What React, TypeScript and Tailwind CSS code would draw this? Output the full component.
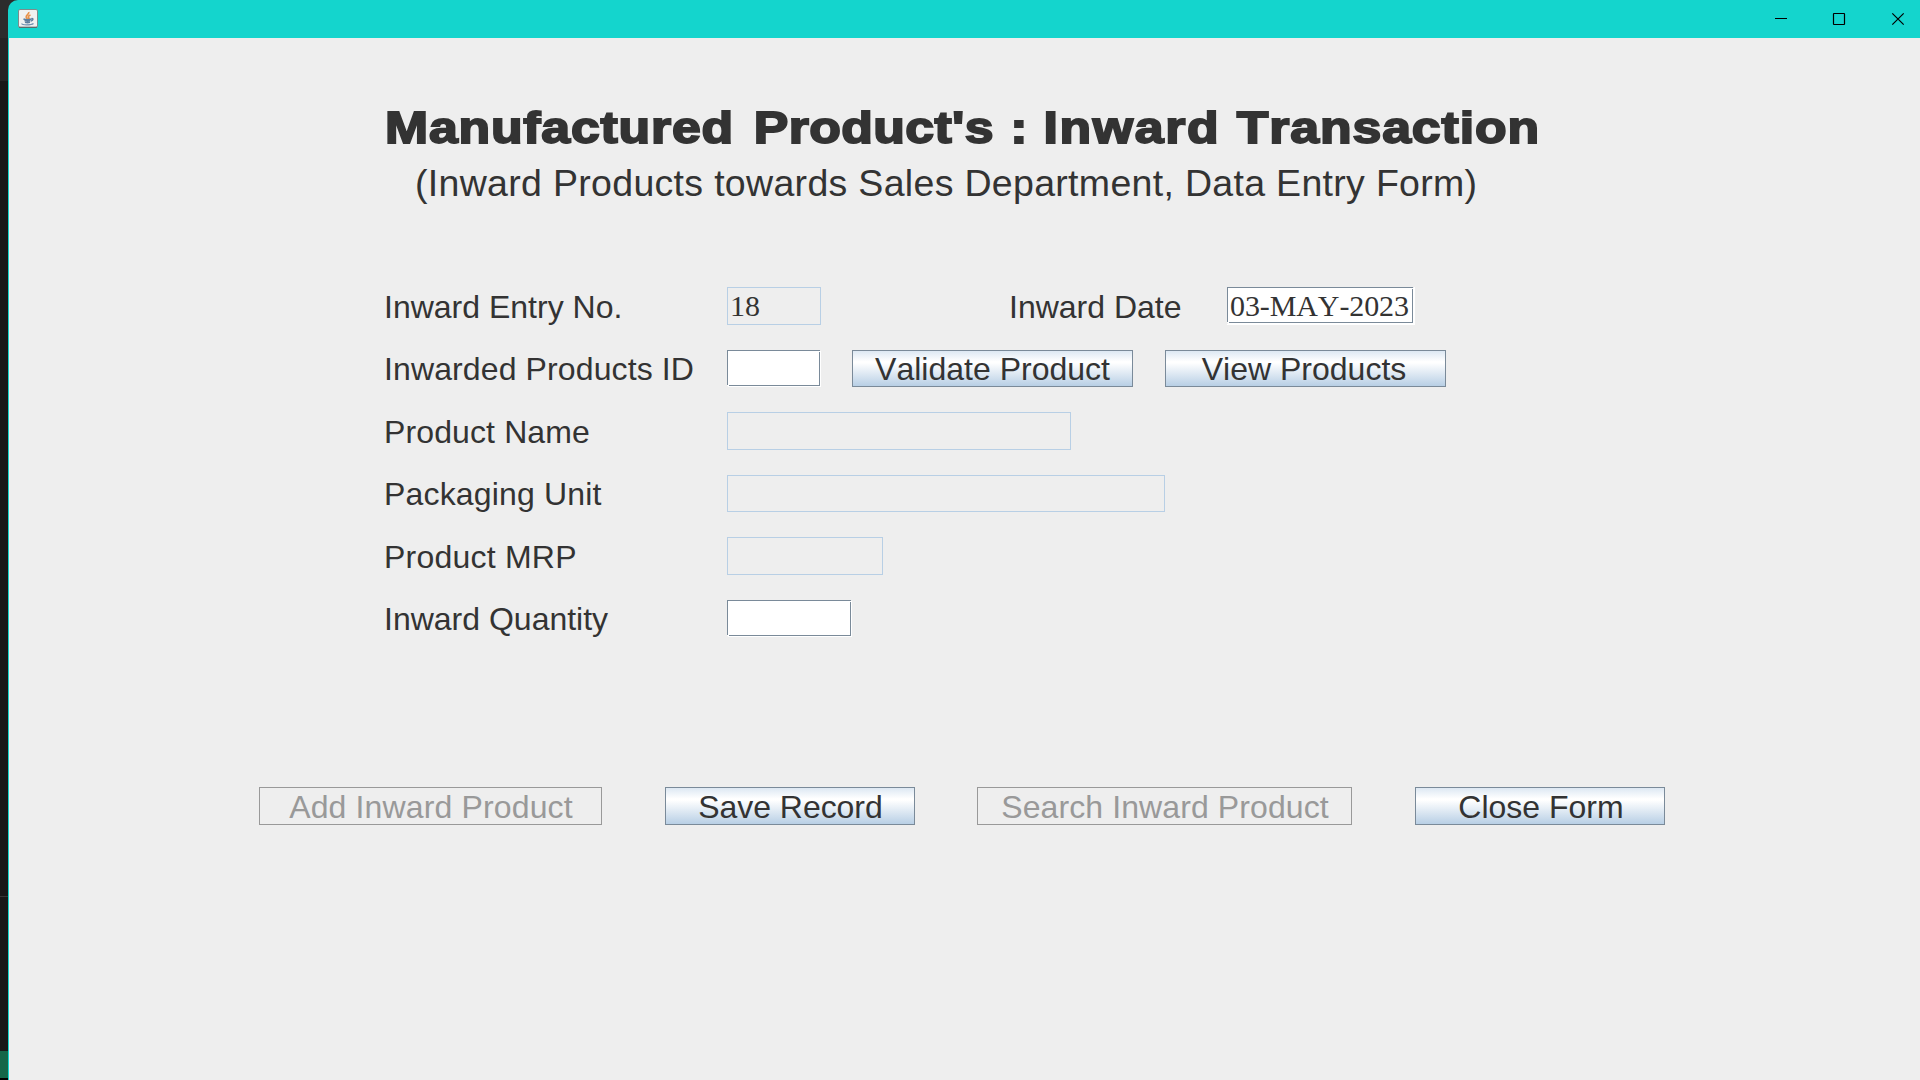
import React from "react";

const sans = "font-['Liberation_Sans',Arial,sans-serif] [font-kerning:none]";
const metal =
  "border border-[#7a8a99] bg-[linear-gradient(to_bottom,#dde8f3_0%,#ffffff_30%,#ffffff_34%,#b8cfe5_100%)] text-[#333333]";

function JavaIcon() {
  return (
    <svg width="20" height="19" viewBox="0 0 20 19" className="block">
      <rect x="0.5" y="0.5" width="19" height="18" rx="1.5" fill="#f1f1f1" stroke="#7d8c8c" />
      <path d="M1 18.2h18" stroke="#4e5f5f" strokeWidth="1" />
      <path d="M10.8 3c.6 2-3 3-2.600 5 .2 1 1.200 1.500 1.300 2.400M12.500 6c-2.200.8-2.600 1.800-1.600 3 .4.6.2 1-.3 1.500" fill="none" stroke="#e8924a" strokeWidth="1.700" />
      <path d="M5.500 10c2 .8 6 .8 8 0M6.500 11.700c2 .7 4.500.7 6 0M7 13.300c1.500.5 3.500.5 5 0M13.500 9.600c2-.4 2 1.700-.5 2.500" fill="none" stroke="#5f7f9f" strokeWidth="1.400" />
      <path d="M4 14.500c-1 1.700 9 1.900 11.500 0" fill="none" stroke="#6f8fae" strokeWidth="1.200" />
    </svg>
  );
}

function Label({ children, className = "" }: { children: React.ReactNode; className?: string }) {
  return (
    <span className={`block whitespace-nowrap text-[32px] text-[#333333] ${className}`}>
      {children}
    </span>
  );
}

function ReadOnly({ className, children }: { className: string; children?: React.ReactNode }) {
  return (
    <div className={`shrink-0 whitespace-nowrap border border-[#b8cfe5] pl-[2px] font-['Liberation_Serif',serif] text-[30px] leading-[36px] text-[#333333] ${className}`}>
      {children}
    </div>
  );
}

function Editable({ className, children }: { className: string; children?: React.ReactNode }) {
  return (
    <div className={`shrink-0 border-white ${className}`}>
      <div className="relative h-full whitespace-nowrap border border-[#7a8a99] bg-white pl-[2px] font-['Liberation_Serif',serif] text-[30px] leading-[36px] tracking-[-0.1px] text-[#333333]">
        {children}
        <span className="absolute top-0 -right-px h-px w-px bg-white" />
        <span className="absolute -top-px -right-[2px] h-px w-px bg-[#eeeeee]" />
        <span className="absolute -bottom-px -left-px h-px w-[2px] bg-white" />
        <span className="absolute -bottom-[2px] -left-px h-px w-px bg-[#eeeeee]" />
      </div>
    </div>
  );
}

function Button({ className, disabled, children }: { className: string; disabled?: boolean; children: React.ReactNode }) {
  return (
    <button
      type="button"
      disabled={disabled}
      className={`flex shrink-0 justify-center whitespace-nowrap text-[32px] ${disabled ? "border border-[#999999] text-[#999999]" : metal} ${className}`}
    >
      <span>{children}</span>
    </button>
  );
}

function Row({ label, labelClass, className, children }: { label: string; labelClass: string; className: string; children: React.ReactNode }) {
  return (
    <div className={`flex items-start ${className}`}>
      <div className="w-[343px] shrink-0">
        <Label className={labelClass}>{label}</Label>
      </div>
      {children}
    </div>
  );
}

export default function App() {
  return (
    <div className={`flex h-[1080px] w-[1920px] overflow-hidden bg-[#2c2c2c] ${sans}`}>
      <div className="flex w-2 shrink-0 flex-col">
        <div className="h-[38px] bg-[#2c2c2c]" />
        <div className="h-[43px] bg-[#252525]" />
        <div className="h-[815px] bg-[#181818]" />
        <div className="h-px bg-[#383838]" />
        <div className="h-[154px] bg-[#181818]" />
        <div className="h-[27px] bg-[#146749]" />
        <div className="h-[2px] bg-black" />
      </div>
      <div className="flex grow flex-col overflow-hidden rounded-tl-[10px] bg-[#14d5cd]">
        <header className="flex h-[38px] shrink-0 items-start">
          <div className="pt-[9px] pl-[10px]">
            <JavaIcon />
          </div>
          <svg width="160" height="38" viewBox="0 0 160 38" className="ml-auto block">
            <path d="M15 18.500h12" stroke="#000" strokeWidth="1" />
            <rect x="73.500" y="13.500" width="11" height="11" rx="0.500" fill="none" stroke="#000" strokeWidth="1.200" />
            <path d="M132.300 13.300l11.400 11.400M143.700 13.300l-11.400 11.400" stroke="#000" strokeWidth="1.200" />
          </svg>
        </header>
        <main className="ml-px grow bg-[#eeeeee]">
          <h1 className="ml-[376px] mt-[64px] h-[52px] w-max origin-left scale-x-[1.15] whitespace-nowrap text-[45px] leading-[52px] font-bold tracking-[0.7px] text-[#333333] [-webkit-text-stroke:1.9px_#333333] [word-spacing:2px]">
            Manufactured <span className="ml-[2px] tracking-[0.35px]">Product's</span>{" "}
            <span className="-ml-px">:</span>{" "}
            <span className="-ml-[2px] tracking-[1.45px]">Inward</span>{" "}
            <span className="-ml-px tracking-[0.8px]">Transaction</span>
          </h1>
          <h2 className="ml-[406px] mt-[7px] h-[44px] w-max whitespace-nowrap text-[37.5px] leading-[44px] font-normal tracking-[0.31px] text-[#333333]">
            (Inward Products towards Sales Department, Data Entry Form)
          </h2>
          <section className="ml-[375px] mt-[82px]">
            <Row label="Inward Entry No." labelClass="leading-[40px]" className="h-[63px]">
              <ReadOnly className="h-[38px] w-[94px]">18</ReadOnly>
              <Label className="ml-[188px] w-[218px] leading-[40px]">Inward Date</Label>
              <Editable className="h-[38px] w-[188px] border-r-2 border-b-2">03-MAY-2023</Editable>
            </Row>
            <Row label="Inwarded Products ID" labelClass="leading-[38px] tracking-[0.12px]" className="h-[62px]">
              <Editable className="h-[37px] w-[94px] border-r border-b" />
              <Button className="ml-[31px] h-[37px] w-[281px] leading-[36px]">Validate Product</Button>
              <Button className="ml-8 h-[37px] w-[281px] pr-[3px] leading-[36px]">View Products</Button>
            </Row>
            <Row label="Product Name" labelClass="leading-[40px] tracking-[0.12px]" className="h-[63px]">
              <ReadOnly className="h-[38px] w-[344px]" />
            </Row>
            <Row label="Packaging Unit" labelClass="leading-[38px] tracking-[0.17px]" className="h-[62px]">
              <ReadOnly className="h-[37px] w-[438px]" />
            </Row>
            <Row label="Product MRP" labelClass="leading-[40px] tracking-[0.22px]" className="h-[63px]">
              <ReadOnly className="h-[38px] w-[156px]" />
            </Row>
            <Row label="Inward Quantity" labelClass="leading-[38px]" className="h-[62px]">
              <Editable className="h-[37px] w-[125px] border-r border-b" />
            </Row>
          </section>
          <section className="ml-[250px] mt-[125px] flex">
            <Button disabled className="h-[38px] w-[343px] pl-px leading-[38px] tracking-[0.14px]">Add Inward Product</Button>
            <Button className="ml-[63px] h-[38px] w-[250px] pl-px leading-[38px] tracking-[-0.06px]">Save Record</Button>
            <Button disabled className="ml-[62px] h-[38px] w-[375px] pl-px leading-[38px] tracking-[0.1px]">Search Inward Product</Button>
            <Button className="ml-[63px] h-[38px] w-[250px] pl-[2px] leading-[38px]">Close Form</Button>
          </section>
        </main>
      </div>
    </div>
  );
}
